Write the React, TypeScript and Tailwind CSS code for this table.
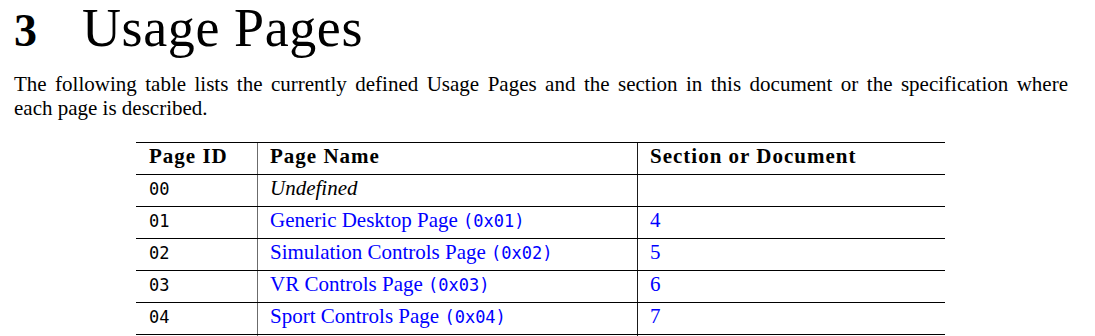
const rows = [
  { id: '00', name: 'Undefined', hex: '', sec: '' },
  { id: '01', name: 'Generic Desktop Page', hex: '(0x01)', sec: '4' },
  { id: '02', name: 'Simulation Controls Page', hex: '(0x02)', sec: '5' },
  { id: '03', name: 'VR Controls Page', hex: '(0x03)', sec: '6' },
  { id: '04', name: 'Sport Controls Page', hex: '(0x04)', sec: '7' },
];

export default function App() {
  return (
    <div className="bg-white min-h-screen pl-[14px] pr-[27px] text-black font-['Liberation_Serif',serif]">
      {/* Section title */}
      <h1 className="flex items-baseline mt-[2px] text-[54px] leading-[53px]">
        <span className="w-[68px] font-bold text-[46px]">3</span>
        <span className="tracking-[0.6px]">Usage Pages</span>
      </h1>

      {/* Intro */}
      <p className="mt-[15px] text-[21px] leading-[24px] text-justify">
        The following table lists the currently defined Usage Pages and the section in this document or the
        specification where each&nbsp;page is described.
      </p>

      {/* Table */}
      <div className="mt-[22px] ml-[122px] w-[809px]">
        <div className="flex h-[32px] border-t border-black text-[21px] leading-[26px] font-bold tracking-[1px]">
          <div className="w-[122px] pl-[13px] border-r border-[#6b6b6b]">Page ID</div>
          <div className="w-[380px] pl-[12px] border-r border-[#1a1a1a]">Page Name</div>
          <div className="flex-1 pl-[12px]">Section or Document</div>
        </div>
        {rows.map((r) => (
          <div key={r.id} className="flex h-[32px] border-t border-black text-[21px] leading-[26px]">
            <div className="w-[122px] pl-[13px] border-r border-[#6b6b6b] font-['DejaVu_Sans_Mono',monospace] text-[17px] leading-[28px]">
              {r.id}
            </div>
            <div className="w-[380px] pl-[12px] border-r border-[#1a1a1a]">
              {r.hex ? (
                <span className="text-[#0000ff]">
                  {r.name}{' '}
                  <span className="font-['DejaVu_Sans_Mono',monospace] text-[17px]">{r.hex}</span>
                </span>
              ) : (
                <span className="italic">{r.name}</span>
              )}
            </div>
            <div className="flex-1 pl-[12px] text-[#0000ff]">{r.sec}</div>
          </div>
        ))}
        {/* next row starts below the fold */}
        <div className="flex h-[32px] border-t border-black">
          <div className="w-[122px] border-r border-[#6b6b6b]" />
          <div className="w-[380px] border-r border-[#1a1a1a]" />
          <div className="flex-1" />
        </div>
      </div>
    </div>
  );
}
